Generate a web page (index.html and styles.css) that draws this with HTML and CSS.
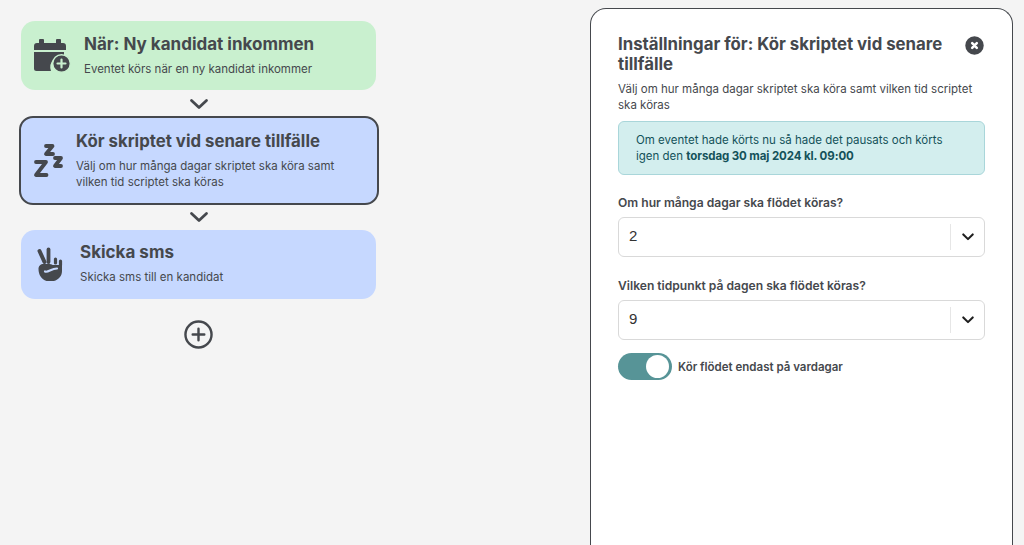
FILE: index.html
```html
<!DOCTYPE html>
<html lang="sv">
  <head>
    <meta charset="UTF-8" />
    <meta name="viewport" content="width=device-width, initial-scale=1.0" />
    <title>Flöde</title>
    <link rel="stylesheet" href="styles.css">
  </head>
  <body>
    <div class="flow">
      <div class="card card-green">
        <svg class="icon icon-calendar" viewBox="0 0 38 34">
          <path fill="#45484d" d="M7 0h3a1 1 0 0 1 1 1v3h12V1a1 1 0 0 1 1-1h3a1 1 0 0 1 1 1v3h2a3 3 0 0 1 3 3v4H1V7a3 3 0 0 1 3-3h2V1a1 1 0 0 1 1-1z" />
          <path fill="#45484d" d="M1 13h30v4.500A11 11 0 0 0 18 32H3.500A2.500 2.500 0 0 1 1 29.500z" />
          <circle cx="28.500" cy="24.500" r="8.800" fill="#45484d" stroke="#c9f0cf" stroke-width="1.400" />
          <path d="M28.500 20.500v8M24.500 24.500h8" stroke="#c9f0cf" stroke-width="2.200" stroke-linecap="round" />
        </svg>
        <div class="card-text">
          <h2>När: Ny kandidat inkommen</h2>
          <p>Eventet körs när en ny kandidat inkommer</p>
        </div>
      </div>
      <svg class="chevron" viewBox="0 0 20 12"><path d="M2.500 2.500 10 9.500l7.500-7" /></svg>
      <div class="card card-blue card-active">
        <svg class="icon icon-zzz" viewBox="0 0 30 34">
          <g fill="none" stroke="#45484d" stroke-width="3.800" stroke-linejoin="round" stroke-linecap="round">
            <path d="M3 18h10L3 31h10.500" />
            <path d="M13 2h6.500L13 10h7" />
            <path d="M22 14h6l-6 8h6" />
          </g>
        </svg>
        <div class="card-text">
          <h2>Kör skriptet vid senare tillfälle</h2>
          <p>Välj om hur många dagar skriptet ska köra samt vilken tid scriptet ska köras</p>
        </div>
      </div>
      <svg class="chevron chevron-second" viewBox="0 0 20 12"><path d="M2.500 2.500 10 9.500l7.500-7" /></svg>
      <div class="card card-blue">
        <svg class="icon icon-hand" viewBox="0 0 28 34">
          <g stroke="#45484d" stroke-linecap="round" fill="none">
            <path d="M3.500 4 8.500 15" stroke-width="4" />
            <path d="M12.500 2.500V15" stroke-width="3.800" />
            <path d="M19.500 12v4" stroke-width="3.200" />
            <path d="M24.500 14v4" stroke-width="3.200" />
          </g>
          <path fill="#45484d" d="M2.500 22c0-3 2-5 5-5h6c2 0 3 1 3 1h9.500v6c0 6-5 10.500-12 10.500S2.500 29 2.500 22z" />
          <path d="M9 24.500c3 1.500 6-3 12-3" fill="none" stroke="#c6d8ff" stroke-width="2.200" stroke-linecap="round" />
        </svg>
        <div class="card-text">
          <h2>Skicka sms</h2>
          <p>Skicka sms till en kandidat</p>
        </div>
      </div>
      <svg class="add" viewBox="0 0 30 30">
        <circle cx="15" cy="15" r="13.500" />
        <path d="M15 9v12M9 15h12" />
      </svg>
    </div>

    <div class="panel">
      <div class="panel-head">
        <h1>Inställningar för: Kör skriptet vid senare tillfälle</h1>
        <svg class="close" viewBox="0 0 20 20">
          <circle cx="10" cy="10" r="10" />
          <path d="M7.800 7.800l4.400 4.400M12.200 7.800l-4.400 4.400" />
        </svg>
      </div>
      <p class="panel-desc">Välj om hur många dagar skriptet ska köra samt vilken tid scriptet ska köras</p>
      <div class="alert">
        <span class="alert-line">Om eventet hade körts nu så hade det pausats och körts</span>
        <span class="alert-line">igen den <b>torsdag 30 maj 2024 kl. 09:00</b></span>
      </div>

      <label class="field-label">Om hur många dagar ska flödet köras?</label>
      <div class="select">
        <span class="select-value">2</span>
        <span class="select-arrow">
          <svg viewBox="0 0 14 9"><path d="M1.500 1.500 7 7l5.500-5.500" /></svg>
        </span>
      </div>

      <label class="field-label">Vilken tidpunkt på dagen ska flödet köras?</label>
      <div class="select">
        <span class="select-value">9</span>
        <span class="select-arrow">
          <svg viewBox="0 0 14 9"><path d="M1.500 1.500 7 7l5.500-5.500" /></svg>
        </span>
      </div>

      <div class="toggle-row">
        <span class="toggle"><span class="toggle-knob"></span></span>
        <span class="toggle-label">Kör flödet endast på vardagar</span>
      </div>
    </div>
  </body>
</html>
```

FILE: styles.css
```css
* {
  box-sizing: border-box;
}
html,
body {
  height: 545px;
  overflow: hidden;
}
body {
  margin: 0;
  background-color: #f4f4f4;
  font-family: Inter, "Open Sans", sans-serif;
  color: #45484d;
  display: flex;
  align-items: flex-start;
}
h1,
h2,
p {
  margin: 0;
}

.flow {
  width: 360px;
  margin: 21px 0 0 18.500px;
  display: flex;
  flex-direction: column;
  align-items: center;
}
.card {
  width: 355px;
  height: 69px;
  border-radius: 14px;
  display: flex;
  align-items: center;
  padding-left: 12px;
}
.card-green {
  background-color: #c9f0cf;
}
.card-blue {
  background-color: #c6d8ff;
}
.card-active {
  width: 360px;
  height: 89px;
  border: 2px solid #45484d;
  padding-left: 12.500px;
}
.card-active h2 {
  font-size: 16.800px;
}
.card-text {
  padding-bottom: 3px;
}
.card-text h2 {
  font-size: 17px;
  line-height: 24px;
  font-weight: 700;
}
.card-active .card-text h2 {
  font-size: 16.800px;
}
.card-text p {
  max-width: 270px;
  font-size: 11.500px;
  line-height: 16px;
  margin-top: 5px;
}
.icon {
  flex: none;
  height: 34px;
}
.icon-calendar {
  width: 38px;
  margin-right: 13px;
}
.icon-zzz {
  width: 30px;
  margin-right: 13px;
}
.icon-hand {
  width: 28px;
  margin: 0 16px 0 3px;
}
.chevron {
  width: 20px;
  height: 12px;
  margin: 8px 0 6px;
  fill: none;
  stroke: #45484d;
  stroke-width: 2.800;
  stroke-linecap: round;
  stroke-linejoin: round;
}
.chevron-second {
  margin: 6px 0 6.500px;
}
.add {
  width: 29px;
  height: 29px;
  margin-top: 21px;
  fill: none;
  stroke: #45484d;
  stroke-width: 2.500;
  stroke-linecap: round;
}

.panel {
  width: 423px;
  height: 537px;
  margin: 8px 0 0 211.500px;
  padding: 25px 27px 0;
  background-color: #fff;
  border: 1px solid #45484d;
  border-bottom: none;
  border-radius: 16px 16px 0 0;
}
.panel-head {
  display: flex;
  justify-content: space-between;
  align-items: flex-start;
}
.panel-head h1 {
  width: 330px;
  font-size: 16.800px;
  line-height: 20px;
  font-weight: 700;
}
.close {
  flex: none;
  width: 21px;
  height: 21px;
  margin-top: 1px;
  fill: #45484d;
  stroke: #fff;
  stroke-width: 2.400;
  stroke-linecap: round;
}
.panel-desc {
  font-size: 11.500px;
  line-height: 16px;
  margin-top: 7px;
}
.alert {
  margin-top: 8px;
  height: 54px;
  padding: 10px 17px;
  font-size: 11.500px;
  line-height: 16px;
  color: #14525a;
  background-color: #d3eeee;
  border: 1px solid #a9d6da;
  border-radius: 6px;
}
.alert-line {
  display: block;
}
.alert b {
  font-weight: 700;
  letter-spacing: -0.100px;
}
.field-label {
  display: block;
  margin-top: 20px;
  font-size: 12.100px;
  line-height: 16px;
  font-weight: 600;
}
.select {
  height: 40px;
  margin-top: 6px;
  display: flex;
  align-items: center;
  justify-content: space-between;
  border: 1px solid #d9d9d9;
  border-radius: 6px;
  padding-left: 10px;
  font-family: "Liberation Sans", sans-serif;
  font-size: 15px;
  color: #333;
}
.select-value {
  padding-bottom: 3px;
}
.select + .field-label {
  margin-top: 21px;
}
.select-arrow {
  width: 34px;
  height: 26px;
  border-left: 1px solid #e6e6e6;
  display: flex;
  align-items: center;
  justify-content: center;
}
.select-arrow svg {
  width: 12px;
  height: 8px;
  fill: none;
  stroke: #1e1e1e;
  stroke-width: 2.400;
  stroke-linecap: round;
  stroke-linejoin: round;
}
.toggle-row {
  display: flex;
  align-items: center;
  gap: 6px;
  margin-top: 13px;
}
.toggle {
  width: 54px;
  height: 27px;
  padding: 2px;
  border-radius: 14px;
  background-color: #579497;
  display: flex;
  justify-content: flex-end;
}
.toggle-knob {
  width: 23px;
  height: 23px;
  margin-right: 1px;
  border-radius: 50%;
  background-color: #fff;
}
.toggle-label {
  font-size: 11.500px;
  font-weight: 600;
}
```
